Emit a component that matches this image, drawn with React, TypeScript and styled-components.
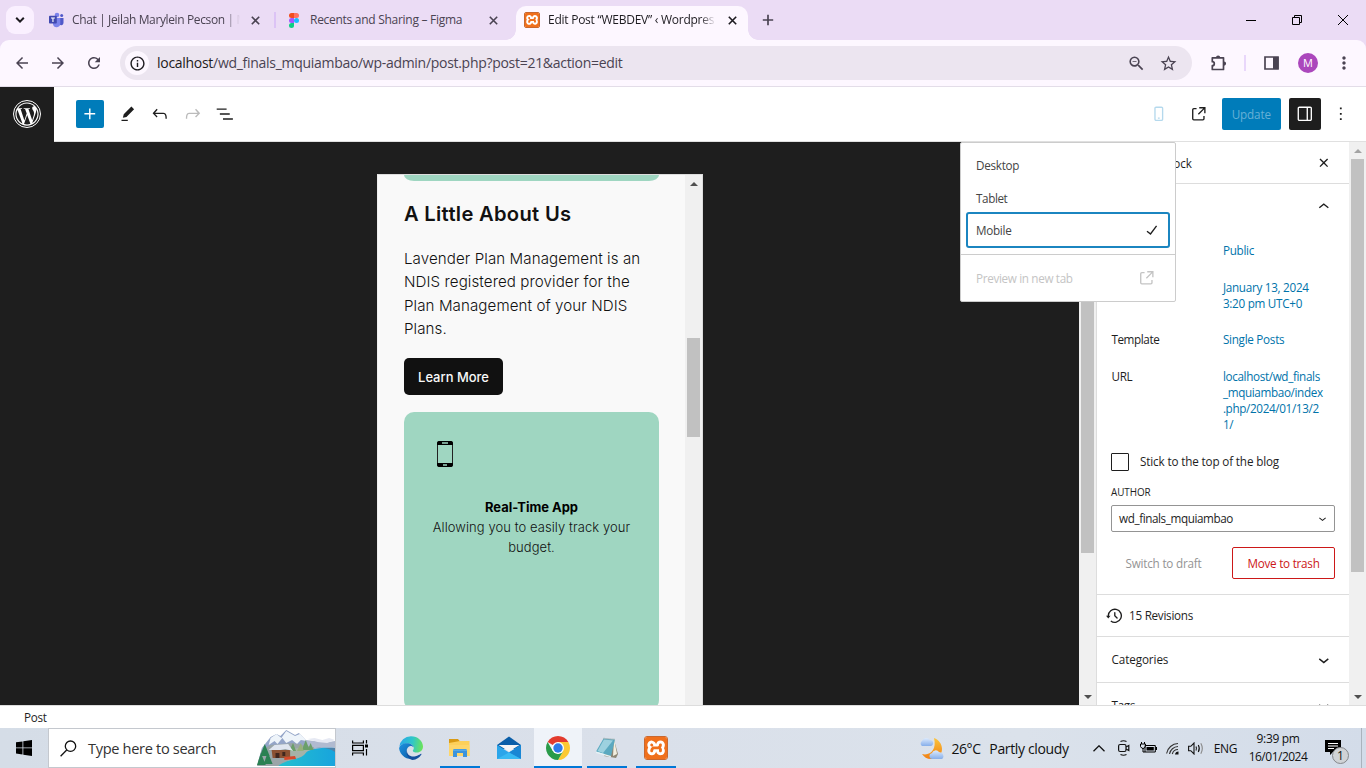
import React from 'react';
import styled, { createGlobalStyle, css } from 'styled-components';
import {
  MdArrowBack, MdArrowForward, MdRefresh, MdInfoOutline, MdZoomOut, MdStarBorder, MdMoreVert,
} from 'react-icons/md';
import { FaWordpressSimple } from 'react-icons/fa';
import { SiXampp } from 'react-icons/si';

const Global = createGlobalStyle`
  * { box-sizing: border-box; }
  body { margin: 0; overflow: hidden; font-family: "Open Sans", "Noto Sans", sans-serif; }
  svg { display: block; flex: none; }
`;

const Screen = styled.div`
  width: 1366px; height: 768px; display: flex; flex-direction: column; overflow: hidden; background: #fff;
`;

const Label = styled.span<{ size?: number; track?: number; color?: string; weight?: number }>`
  font-size: ${p => p.size ?? 11.7}px;
  letter-spacing: ${p => p.track ?? -0.28}px;
  color: ${p => p.color ?? '#1e1e1e'};
  font-weight: ${p => p.weight ?? 400};
  white-space: nowrap;
`;
const UiText = styled(Label)`padding-bottom: 2px;`;

/* ---------- browser ---------- */
const TabStrip = styled.div`
  height: 40px; flex: none; background: #ebdcf5; display: flex; align-items: flex-end; padding-left: 6px;
`;
const TabSearch = styled.div`
  width: 28px; height: 28px; border-radius: 9px; background: #faf0ff; margin-bottom: 6px;
  display: flex; align-items: center; justify-content: center;
`;
const Tab = styled.div<{ w: number; ml: number; active?: boolean; right?: number }>`
  width: ${p => p.w}px; height: 34px; margin-left: ${p => p.ml}px; padding: 0 ${p => p.right ?? 11}px 6px 8px;
  display: flex; align-items: center; position: relative; border-radius: 10px 10px 0 0;
  ${p => p.active && css`
    background: #fdf7ff;
    &::before, &::after {
      content: ''; position: absolute; bottom: 0; width: 10px; height: 10px;
    }
    &::before { left: -10px; background: radial-gradient(circle at 0 0, transparent 9.5px, #fdf7ff 10px); }
    &::after { right: -10px; background: radial-gradient(circle at 100% 0, transparent 9.5px, #fdf7ff 10px); }
  `}
`;
const TabTitle = styled(Label)<{ w: number; ml: number; fade?: boolean }>`
  width: ${p => p.w}px; margin-left: ${p => p.ml}px; overflow: hidden; line-height: 20px;
  ${p => p.fade && css`
    mask-image: linear-gradient(to right, #000 calc(100% - 16px), transparent);
  `}
`;
const Spacer = styled.div<{ w?: number }>`
  ${p => (p.w === undefined ? 'flex: 1;' : `width: ${p.w}px; flex: none;`)}
`;
const TabDivider = styled.div`width: 2px; height: 16px; background: #dcc3f5; margin-bottom: 12px;`;
const WindowButton = styled.div`
  width: 46px; height: 40px; display: flex; align-items: center; justify-content: center;
`;
const NewTab = styled.div`
  width: 40px; height: 40px; display: flex; align-items: center; justify-content: center;
`;
const ToolbarBack = styled.div`background: #ebdcf5; flex: none;`;
const Toolbar = styled.div`
  height: 47px; background: #fdf7ff; border-radius: 9px 9px 0 0; border-bottom: 1px solid #e3dde8;
  display: flex; align-items: center; color: #4a4352; padding-left: 4px;
`;
const ToolCell = styled.div<{ w: number }>`
  width: ${p => p.w}px; display: flex; align-items: center; justify-content: center; flex: none;
`;
const Omnibox = styled.div`
  width: 1072px; height: 34px; margin-left: 8px; border-radius: 17px; background: #ece5f0;
  display: flex; align-items: center; padding: 0 14px 0 5px;
`;
const SiteInfo = styled.div`
  width: 24px; height: 24px; border-radius: 50%; background: #fdf7ff; color: #1d1b20; margin-right: 8px;
  display: flex; align-items: center; justify-content: center;
`;
const Avatar = styled.div`
  width: 20px; height: 20px; border-radius: 50%; background: #ab47bc; color: #fff;
  font-size: 11px; line-height: 20px; text-align: center;
`;
const BarDivider = styled.div`width: 2px; height: 16px; background: #e9d7fb;`;

/* ---------- editor ---------- */
const EditorHeader = styled.div`
  height: 55px; flex: none; display: flex; align-items: center; background: #fff; border-bottom: 1px solid #e0e0e0;
`;
const SiteHub = styled.div`
  width: 54px; height: 55px; background: #1e1e1e; margin-bottom: -1px; color: #fff;
  display: flex; align-items: center; justify-content: center; padding-bottom: 1px;
`;
const LogoRing = styled.div`
  width: 28px; height: 28px; border: 1.5px solid #fff; border-radius: 50%;
  display: flex; align-items: center; justify-content: center;
`;
const Inserter = styled.div`
  width: 28px; height: 28px; background: #007cba; border-radius: 2px; color: #fff; margin: 0 8px 0 22px;
  display: flex; align-items: center; justify-content: center;
`;
const EditorTool = styled.div<{ dim?: boolean }>`
  width: 32.2px; height: 32px; display: flex; align-items: center; justify-content: center;
  color: ${p => (p.dim ? '#bbb' : '#1e1e1e')};
`;
const UpdateButton = styled.div`
  width: 59px; height: 32px; background: #007cba; border-radius: 2px; margin-left: 7px;
  display: flex; align-items: center; justify-content: center;
`;
const SettingsToggle = styled.div`
  width: 32px; height: 32px; background: #1e1e1e; border-radius: 2px; color: #fff; margin: 0 4px 0 8px;
  display: flex; align-items: center; justify-content: center;
`;
const Workspace = styled.div`height: 563px; flex: none; display: flex; overflow: hidden; position: relative;`;
const Canvas = styled.div`width: 1079px; background: #1e1e1e; padding: 32px 0 0 377px;`;
const DeviceFrame = styled.div`
  width: 326px; height: 600px; background: #f9f9f9; border: 1px solid #ddd; border-left-color: #eee;
  display: flex; overflow: hidden;
`;
const Page = styled.div`
  width: 307px; padding: 0 25px 0 26px; font-family: Inter, sans-serif; color: #111; flex: none;
`;
const CardTail = styled.div`width: 255px; height: 6px; background: #9fd6c1; border-radius: 0 0 10px 10px / 0 0 6px 6px;`;
const Heading = styled.h2`
  margin: 21px 0 0; font-size: 20.16px; font-weight: 600; line-height: 24px; letter-spacing: 0.3px; color: #111; white-space: nowrap;
`;
const Paragraph = styled.p`
  margin: 21px 0 0; font-size: 15.12px; font-weight: 300; line-height: 23.4px; letter-spacing: 0.09px; white-space: nowrap;
`;
const LearnMore = styled.div`
  width: 99px; height: 37px; margin-top: 17px; background: #111; color: #f9f9f9; border-radius: 5px;
  font-size: 12.96px; font-weight: 500; line-height: 39px; text-align: center;
`;
const FeatureCard = styled.div`
  width: 255px; height: 298px; margin-top: 17px; background: #9fd6c1; border-radius: 10px; padding: 29px 20px 0;
  display: flex; flex-direction: column; text-align: center; font-size: 12.96px; font-weight: 300; line-height: 20px; color: #111;
`;
const FeatureText = styled.span`letter-spacing: 0.09px;`;
const PhoneMark = styled.svg`margin: 0 0 30px 13px;`;
const FeatureTitle = styled.b`font-weight: 700; color: #000;`;

const ScrollTrack = styled.div`
  width: 17px; flex: none; background: #f0f0f0; padding: 0 2px; display: flex; flex-direction: column; align-items: center;
`;
const ScrollArrow = styled.div<{ dir: 'up' | 'down'; dim?: boolean }>`
  height: 17px; width: 13px; display: flex; align-items: center; justify-content: center; flex: none;
  &::before {
    content: ''; border: 4px solid transparent;
    ${p => (p.dir === 'up'
      ? `border-top: 0; border-bottom-color: ${p.dim ? '#a3a3a3' : '#505050'};`
      : `border-bottom: 0; border-top-color: #505050;`)}
  }
`;
const Thumb = styled.div<{ top: number; h: number }>`
  width: 13px; height: ${p => p.h}px; margin-top: ${p => p.top}px; background: #c1c1c1; flex: none;
`;

const Sidebar = styled.div`width: 253px; flex: none; border-left: 1px solid #ddd; background: #fff; overflow: hidden;`;
const SidebarTabs = styled.div`
  height: 42px; border-bottom: 1px solid #ddd; display: flex; align-items: center; justify-content: space-between;
  padding: 1px 14px 0 66px;
`;
const SummaryToggle = styled.div`height: 45px; display: flex; justify-content: flex-end; align-items: center; padding: 0 14px;`;
const Summary = styled.div`
  height: 366px; border-bottom: 1px solid #ddd; padding: 13px 14px 0; display: flex; flex-direction: column; gap: 20.5px;
`;
const MetaRow = styled.div`
  display: grid; grid-template-columns: 111.5px 1fr; line-height: 16px; align-items: start; padding-left: 0.4px;
`;
const MetaValue = styled(Label)`white-space: pre-line; grid-column: 2; line-height: 16px;`;
const StickyRow = styled.div`display: flex; align-items: center; height: 18px; gap: 11px; margin-top: 1px;`;
const CheckBox = styled.div`width: 18px; height: 18px; border: 1px solid #1e1e1e; border-radius: 1px;`;
const AuthorField = styled.div`display: flex; flex-direction: column; gap: 6px; margin-top: -7px;`;
const Select = styled.div`
  width: 224px; height: 27px; border: 1px solid #949494; border-radius: 2px; padding: 0 4px 0 7px;
  display: flex; align-items: center; justify-content: space-between;
`;
const ActionRow = styled.div`display: flex; gap: 16px; margin-top: -5.5px;`;
const ActionButton = styled.div<{ danger?: boolean }>`
  width: ${p => (p.danger ? 103 : 105)}px; height: 32px; border-radius: 2px;
  border: 1px solid ${p => (p.danger ? '#cc1818' : 'transparent')};
  display: flex; align-items: center; justify-content: center;
`;
const RevisionRow = styled.div`
  height: 42px; border-bottom: 1px solid #ddd; display: flex; align-items: center; padding: 0 7px; gap: 3.5px;
`;
const PanelRow = styled.div`
  height: 46px; border-bottom: 1px solid #ddd; display: flex; align-items: center; justify-content: space-between;
  padding: 0 14px 0 14.5px;
`;

const PreviewMenu = styled.div`
  position: absolute; left: 960px; top: 0; width: 216px; height: 160px; background: #fff; border: 1px solid #ccc;
  border-radius: 2px; display: flex; flex-direction: column;
`;
const MenuItem = styled.div<{ h: number; selected?: boolean; right?: number }>`
  height: ${p => p.h}px; margin: 0 5px; padding: 0 ${p => p.right ?? 10}px 0 10px;
  display: flex; align-items: center; justify-content: space-between;
  ${p => p.selected && css`margin-top: 4px; box-shadow: inset 0 0 0 2px #1b85c0; border-radius: 3px;`}
`;
const MenuRule = styled.div`border-top: 1px solid #ccc; margin: 6px 0 6px;`;

const EditorFooter = styled.div`
  height: 23px; flex: none; border-top: 1px solid #ddd; background: #fff; padding-left: 24px; display: flex; align-items: center;
`;

/* ---------- taskbar ---------- */
const Taskbar = styled.div`
  height: 40px; flex: none; display: flex; align-items: stretch;
  background: linear-gradient(90deg, #d5dde7, #dae0ea 45%, #dbe2eb 75%, #d3dce9);
`;
const TaskCell = styled.div<{ w?: number; open?: boolean; active?: boolean }>`
  width: ${p => p.w ?? 48}px; margin-right: ${p => (p.w ? 0 : 1)}px; display: flex; align-items: center; justify-content: center;
  flex: none;
  background-color: ${p => (p.active ? '#eff3f9' : 'transparent')};
  background-image: ${p => (p.open || p.active ? 'linear-gradient(#0078d7, #0078d7)' : 'none')};
  background-repeat: no-repeat; background-position: center bottom;
  background-size: ${p => (p.active ? '48px' : '40px')} 2px;
`;
const SearchBox = styled.div`
  width: 288px; border: 1px solid #c4c8ce; background: #fff; display: flex; align-items: center; padding-left: 11px;
`;
const Clock = styled.div`
  width: 70px; display: flex; flex-direction: column; align-items: center; justify-content: center; line-height: 18px;
`;
const PeekEdge = styled.div`width: 5px; border-left: 1px solid #aab3bd;`;

const wp = {
  plus: 'M18 11.2h-5.2V6h-1.6v5.2H6v1.6h5.2V18h1.6v-5.2H18z',
  edit: 'm19 7-3-3-8.5 8.5-1 4 4-1L19 7Zm-7 11.5H5V20h7v-1.5Z',
  undo: 'M18.3 11.7c-.6-.6-1.4-.9-2.3-.9H6.7l2.9-3.3-1.1-1-4.5 5L8.5 16l1-1-2.7-2.7H16c.5 0 .9.2 1.3.5 1 1 1 3.4 1 4.5v.3h1.5v-.2c0-1.5 0-4.3-1.5-5.7z',
  redo: 'M15.6 6.5l-1.1 1 2.9 3.3H8c-.9 0-1.7.3-2.3.9-1.4 1.5-1.4 4.2-1.4 5.6v.2h1.5v-.3c0-1.1 0-3.5 1-4.5.3-.3.7-.5 1.3-.5h9.2L14.5 15l1.1 1.1 4.6-4.6-4.6-5z',
  list: 'M3 6h11v1.5H3V6Zm3.5 5.5h11V13h-11v-1.5ZM21 17H10v1.5h11V17Z',
  mobile: 'M15 4H9c-1.1 0-2 .9-2 2v12c0 1.1.9 2 2 2h6c1.1 0 2-.9 2-2V6c0-1.1-.9-2-2-2zm.5 14c0 .3-.2.5-.5.5H9c-.3 0-.5-.2-.5-.5V6c0-.3.2-.5.5-.5h6c.3 0 .5.2.5.5v12zm-4.5-.5h2V16h-2v1.5z',
  external: 'M19.5 4.5h-7V6h4.44l-5.97 5.97 1.06 1.06L18 7.06v4.44h1.5v-7Zm-13 1a2 2 0 0 0-2 2v10a2 2 0 0 0 2 2h10a2 2 0 0 0 2-2v-3H17v3a.5.5 0 0 1-.5.5h-10a.5.5 0 0 1-.5-.5v-10a.5.5 0 0 1 .5-.5h3V5.5h-3Z',
  drawer: 'M18 4H6c-1.1 0-2 .9-2 2v12c0 1.1.9 2 2 2h12c1.1 0 2-.9 2-2V6c0-1.1-.9-2-2-2zm-4 14.5H6c-.3 0-.5-.2-.5-.5V6c0-.3.2-.5.5-.5h8v13zm4.5-.5c0 .3-.2.5-.5.5h-2.5v-13H18c.3 0 .5.2.5.5v12z',
  more: 'M13 19h-2v-2h2v2zm0-6h-2v-2h2v2zm0-6h-2V5h2v2z',
  check: 'M16.7 7.1l-6.3 8.5-3.3-2.5-.9 1.2 4.5 3.4L17.9 8z',
  close: 'M12 13.06l3.712 3.713 1.061-1.06L13.061 12l3.712-3.712-1.06-1.06L12 10.938 8.288 7.227l-1.061 1.06L10.939 12l-3.712 3.712 1.06 1.061L12 13.061z',
  up: 'M6.5 12.4L12 8l5.5 4.4-.9 1.2L12 10l-4.5 3.6-1-1.2z',
  down: 'M17.5 11.6L12 16l-5.5-4.4.9-1.2L12 14l4.5-3.6 1 1.2z',
  backup: 'M5.5 12h1.75l-2.5 3-2.5-3H4a8 8 0 113.134 6.35l.907-1.194A6.5 6.5 0 105.5 12zm9.53 1.97l-2.28-2.28V8.5a.75.75 0 00-1.5 0V12a.747.747 0 00.218.529l1.282-.84-1.28.842 2.5 2.5a.75.75 0 101.06-1.061z',
};
const WpIcon = ({ name, color = 'currentColor', size = 21.6 }: { name: keyof typeof wp; color?: string; size?: number }) => (
  <svg width={size} height={size} viewBox="0 0 24 24" fill={color}><path d={wp[name]} /></svg>
);

const TabClose = ({ color = '#4a4352' }: { color?: string }) => (
  <svg width="9" height="9" viewBox="0 0 9 9" stroke={color} strokeWidth="1.6"><path d="M.8.8l7.4 7.4M8.2.8L.8 8.2" /></svg>
);
const TeamsLogo = () => (
  <svg width="16" height="16" viewBox="0 0 16 16">
    <circle cx="9" cy="3" r="2.3" fill="#7b83eb" /><circle cx="13.7" cy="3.6" r="1.5" fill="#5059c9" />
    <path d="M11 6h4.5v5a2.3 2.3 0 0 1-4.5.6z" fill="#5059c9" />
    <path d="M5 6h7.3v5.5a3.7 3.7 0 0 1-7.3.8z" fill="#7b83eb" />
    <rect x="1" y="3.8" width="7.8" height="7.8" rx=".8" fill="#4049b0" />
    <path d="M3 6h3.9M4.95 6v4" stroke="#fff" strokeWidth="1.1" />
  </svg>
);
const FigmaLogo = () => (
  <svg width="10" height="15" viewBox="0 0 10 15">
    <path d="M5 0H2.5a2.5 2.5 0 0 0 0 5H5z" fill="#f24e1e" /><path d="M5 0h2.5a2.5 2.5 0 0 1 0 5H5z" fill="#ff7262" />
    <path d="M5 5H2.5a2.5 2.5 0 0 0 0 5H5z" fill="#a259ff" /><circle cx="7.5" cy="7.5" r="2.5" fill="#1abcfe" />
    <path d="M2.5 10H5v2.5A2.5 2.5 0 1 1 2.5 10z" fill="#0acf83" />
  </svg>
);
const PuzzleIcon = () => (
  <svg width="18" height="18" viewBox="0 0 18 18">
    <path d="M2.300 3.800h11.200v11.700H2.300v-3.800a2 2 0 0 0 0-4z" fill="none" stroke="#4a4352" strokeWidth="1.700" strokeLinejoin="round" />
    <path d="M6 3.500a2.100 2.100 0 0 1 4.200 0zM14 7.500a2.100 2.100 0 0 1 0 4.200z" fill="#4a4352" />
  </svg>
);
const XamppBox = styled.div<{ s: number }>`
  width: ${p => p.s}px; height: ${p => p.s}px; border-radius: ${p => p.s / 8}px; color: #f0701c; flex: none;
  background: #fff; overflow: hidden; border: 1px solid #c9682f;
  display: flex; align-items: center; justify-content: center;
`;
const Xampp = ({ s }: { s: number }) => <XamppBox s={s}><SiXampp size={s} /></XamppBox>;

const EdgeLogo = () => (
  <svg width="24" height="24" viewBox="0 0 24 24">
    <defs>
      <linearGradient id="eg1" x1="0" y1=".3" x2="1" y2=".4"><stop offset="0" stopColor="#2aa6e8" /><stop offset=".55" stopColor="#2fc6c9" /><stop offset="1" stopColor="#6be35a" /></linearGradient>
      <linearGradient id="eg2" x1="0" y1="0" x2="1" y2="1"><stop offset="0" stopColor="#1d92e0" /><stop offset="1" stopColor="#0c59a4" /></linearGradient>
    </defs>
    <path d="M.3 11A11.8 11.8 0 0 1 12 .2c7 0 12 5 12 10.400 0 3.800-2.800 6-6 6-2.500 0-4.200-.9-4.200-1.800 0-.7 1-1 1-2.800 0-2.700-2.600-4.600-6-4.600C4.500 7.400 1 9 .3 11z" fill="url(#eg1)" />
    <path d="M.1 12.500C.3 9.200 4 7.200 8 7.200c3.600 0 6.300 2 6.800 4.200-.6-1-2-1.500-3.200-1.500-2.400.4-4 2.300-4 5.100 0 4 3 7 7.500 7.500A12 12 0 0 1 .1 12.500z" fill="url(#eg2)" />
    <path d="M8 13.400c-.8 5.400 4 8 8.500 6.800 2.300-.6 4.300-1.600 5.400-2.400.5-.3.800.1.500.600A12 12 0 0 1 13.600 24C8.700 23 6.400 17 8 13.400z" fill="#134f9e" />
  </svg>
);
const ExplorerLogo = () => (
  <svg width="24" height="20" viewBox="0 0 24 20">
    <path d="M1 1h9l2 2.500V7H1z" fill="#d99a14" /><path d="M1 5l11-2h9.500v15H1z" fill="#fdd05a" />
    <path d="M1 7h21v11H1z" fill="#ffda75" opacity=".6" />
    <path d="M5 19v-6.500Q5 11 6.500 11h11q1.500 0 1.500 1.500V19h-4v-4H9v4z" fill="#3c94dd" /><path d="M5 11.500h14V13H5z" fill="#5fb2ee" opacity=".7" />
  </svg>
);
const MailLogo = () => (
  <svg width="26" height="24" viewBox="0 0 26 24">
    <path d="M1 9L13 .5 25 9v4H1z" fill="#0a5ea8" />
    <path d="M1 9l12 7.500L25 9v14H1z" fill="#2aa5ea" /><path d="M25 9L13 16.500 25 23z" fill="#1a86d4" /><path d="M1 23l12-6.500 12 6.500z" fill="#38b9f3" />
    <path d="M2.500 9h21L13 15.500z" fill="#f5f5f5" />
  </svg>
);
const ChromeLogo = () => (
  <svg width="24" height="24" viewBox="0 0 24 24">
    <path d="M12 12L1.610 6A12 12 0 0 1 22.390 6z" fill="#e33b2e" /><path d="M12 6h10.390A12 12 0 0 1 12 24l5.200-9z" fill="#fcc934" />
    <path d="M1.610 6l5.200 9 5.190 3 .9 0L12 24A12 12 0 0 1 1.610 6z" fill="#2a9b4a" /><path d="M6.800 15L12 18l5.200-3L12 24z" fill="#2a9b4a" />
    <circle cx="12" cy="12" r="6" fill="#fff" /><circle cx="12" cy="12" r="4.700" fill="#2f7bea" />
  </svg>
);
const NotepadLogo = () => (
  <svg width="24" height="24" viewBox="0 0 24 24">
    <path d="M19 4l4 14-2 4-12-2z" fill="#8d8674" /><path d="M19 3l3 15-4 2z" fill="#f2efdf" />
    <path d="M8.500 2.500l11.500 1L16 20 1 15.500z" fill="#5ba9c0" /><path d="M9 3.500l9 1L8 17l-5.500-2z" fill="#b9e3ec" opacity=".7" />
    <path d="M1 15.500L16 20l-.3 1.300L1 17z" fill="#e6f2f5" /><path d="M8.500 2.500l11.500 1" stroke="#9aa" strokeWidth="1.500" strokeDasharray="1 1" />
  </svg>
);
const Landscape = () => (
  <svg width="78" height="36" viewBox="0 0 80 36" preserveAspectRatio="none">
    <defs><linearGradient id="lake" x1="0" x2="1"><stop offset="0" stopColor="#23c0cf" /><stop offset="1" stopColor="#18a4dd" /></linearGradient></defs>
    <path d="M5 18L14 7l6-3 4 2 6-6 9 5 4-2 7 7 8 7v15H1z" fill="#94a5c8" />
    <path d="M14 8l6-4 5 4 5-7 9 5 5-2 7 7-6-1-4 4-5-4-6 3-4-5-5 6-3-3-6 4z" fill="#eef4fa" />
    <path d="M50 10l9 1 6-1 8 2 7-1v12H50z" fill="#b0bad0" /><path d="M52 9l7-1 8 2 7-2 6 2-8 3-10-1z" fill="#e6e9f3" />
    <path d="M0 36l5-16 9-5 22-2 22 4 4 6-20 13z" fill="#9aa5a8" /><path d="M30 20l18-3 10 3-12 8-14 4z" fill="#a5b3a8" />
    <path d="M22 36c7-7 24-6 28-13 2-3 12-6 30-5v18z" fill="url(#lake)" />
    <path d="M60 18q12-1 20 4v-4z" fill="#4f82a8" />
    <path d="M8 14l5 12H3zM4 23l5 12H0zM11 22l5 12H7z" fill="#2a8153" />
    <path d="M37 13l3 8h-7zM50 10l4 10h-8zM55 13l3 7h-6z" fill="#6b9f6a" /><path d="M45 13l3 8h-7z" fill="#98b07c" />
    <path d="M15 20h19v8H16z" fill="#8b5132" /><path d="M12 20l6-5 14-1 5 7-8-2-5 1z" fill="#dfe5ef" /><path d="M19 23h4v5h-4zM26 22h3v4h-3z" fill="#40271e" />
    <path d="M28 27l11-1 1 3-12 1z" fill="#d5492b" />
  </svg>
);
const WeatherIcon = () => (
  <svg width="25" height="23" viewBox="0 0 25 23">
    <defs><linearGradient id="moon" x1="0" y1="0" x2="0" y2="1"><stop offset="0" stopColor="#fbc43d" /><stop offset="1" stopColor="#f07f13" /></linearGradient>
      <linearGradient id="cloud" x1="0" y1="0" x2="0" y2="1"><stop offset="0" stopColor="#dceafd" /><stop offset="1" stopColor="#86aeea" /></linearGradient></defs>
    <path d="M15 1c5 2 8 6 8 11 0 6-5 10-11 10-4 0-7-2-9-5 8 2 15-4 12-16z" fill="url(#moon)" />
    <path d="M3 9a3 3 0 0 1 0-5 4.500 4.500 0 0 1 8-1c3 0 4 3 2.500 5q-.5 1-2 1z" fill="url(#cloud)" />
    <path d="M14 22a3 3 0 0 1-1-6 4 4 0 0 1 7-1c4 0 6 5 3 7z" fill="url(#cloud)" />
  </svg>
);

export default function App() {
  return (
    <Screen>
      <Global />
      <TabStrip>
        <TabSearch><svg width="10" height="6" viewBox="0 0 10 6" fill="none" stroke="#1d1b20" strokeWidth="2"><path d="M1.200 .8L5 4.600 8.800 .8" /></svg></TabSearch>
        <Tab w={226} ml={6} right={6}>
          <TeamsLogo />
          <TabTitle size={12} w={168} ml={8} track={-0.37} fade color="#4a4352">Chat | Jeilah Marylein Pecson | M</TabTitle>
          <Spacer /><TabClose />
        </Tab>
        <Spacer w={8} /><TabDivider />
        <Tab w={229} ml={4}>
          <Spacer w={1} /><FigmaLogo />
          <TabTitle size={12} w={165} ml={11} color="#4a4352">Recents and Sharing – Figma</TabTitle>
          <Spacer /><TabClose />
        </Tab>
        <Tab w={232} ml={7} active>
          <Xampp s={16} />
          <TabTitle size={12} w={168} ml={8} fade track={-0.25} color="#1d1b20">Edit Post “WEBDEV” ‹ Wordpres</TabTitle>
          <Spacer /><TabClose color="#1d1b20" />
        </Tab>
        <NewTab><svg width="12" height="12" viewBox="0 0 12 12" stroke="#4a4352" strokeWidth="1.700"><path d="M6 .8v10.400M.8 6h10.400" /></svg></NewTab>
        <Spacer />
        <WindowButton><svg width="10" height="10" viewBox="0 0 10 10" stroke="#000"><path d="M0 5.500h10" /></svg></WindowButton>
        <WindowButton><svg width="10" height="10" viewBox="0 0 10 10" stroke="#000" fill="none"><path d="M.5 2.500h7v7h-7zM2.500 2.500v-2h7v7h-2" /></svg></WindowButton>
        <WindowButton><svg width="10" height="10" viewBox="0 0 10 10" stroke="#000"><path d="M0 0l10 10M10 0L0 10" /></svg></WindowButton>
      </TabStrip>
      <ToolbarBack>
        <Toolbar>
          <ToolCell w={36}><MdArrowBack size={18} /></ToolCell>
          <ToolCell w={36}><MdArrowForward size={18} /></ToolCell>
          <ToolCell w={36}><MdRefresh size={18} /></ToolCell>
          <Omnibox>
            <SiteInfo><MdInfoOutline size={17} /></SiteInfo>
            <UiText size={14} track={-0.29} color="#1d1b20">localhost<Label size={14} track={-0.29} color="#4a4352">/wd_finals_mquiambao/wp-admin/post.php?post=21&amp;action=edit</Label></UiText>
            <Spacer />
            <MdZoomOut size={19} /><Spacer w={13} /><MdStarBorder size={19} />
          </Omnibox>
          <Spacer w={18} /><PuzzleIcon />
          <Spacer w={16} /><BarDivider /><Spacer w={18} />
          <svg width="15" height="14" viewBox="0 0 15 14"><path d="M1 1h13v12H1z" fill="none" stroke="#4a4352" strokeWidth="1.700" /><path d="M9 1h5.500v12H9z" fill="#4a4352" /></svg>
          <Spacer w={19} /><Avatar>M</Avatar>
          <Spacer w={16} /><MdMoreVert size={20} />
        </Toolbar>
      </ToolbarBack>

      <EditorHeader>
        <SiteHub><LogoRing><FaWordpressSimple size={24} /></LogoRing></SiteHub>
        <Inserter><WpIcon name="plus" /></Inserter>
        <EditorTool><WpIcon name="edit" /></EditorTool>
        <EditorTool><WpIcon name="undo" /></EditorTool>
        <EditorTool dim><WpIcon name="redo" /></EditorTool>
        <EditorTool><WpIcon name="list" /></EditorTool>
        <Spacer />
        <WpIcon name="mobile" color="#b5d9ed" /><Spacer w={18.6} />
        <WpIcon name="external" color="#1e1e1e" /><Spacer w={5} />
        <UpdateButton><Label color="#66b0d6" track={-0.15}>Update</Label></UpdateButton>
        <SettingsToggle><WpIcon name="drawer" /></SettingsToggle>
        <EditorTool><WpIcon name="more" /></EditorTool>
        <Spacer w={9} />
      </EditorHeader>

      <Workspace>
        <Canvas>
          <DeviceFrame>
            <Page>
              <CardTail />
              <Heading>A Little About Us</Heading>
              <Paragraph>
                Lavender Plan Management is an<br />NDIS registered provider for the<br />Plan Management of your NDIS<br />Plans.
              </Paragraph>
              <LearnMore>Learn More</LearnMore>
              <FeatureCard>
                <PhoneMark width="16" height="26" viewBox="0 0 16 26">
                  <rect x=".5" y=".5" width="15" height="25" rx="2" fill="none" stroke="#222" />
                  <path d="M2 0h12a2 2 0 0 1 2 2v2H0V2a2 2 0 0 1 2-2zM0 22h16v2a2 2 0 0 1-2 2H2a2 2 0 0 1-2-2z" fill="#000" />
                  <path d="M5 2h6M6 24h4" stroke="#9fd6c1" strokeWidth="1.300" />
                </PhoneMark>
                <FeatureTitle>Real-Time App</FeatureTitle>
                <FeatureText>Allowing you to easily track your<br />budget.</FeatureText>
              </FeatureCard>
            </Page>
            <ScrollTrack><ScrollArrow dir="up" /><Thumb top={146} h={99} /></ScrollTrack>
          </DeviceFrame>
        </Canvas>
        <ScrollTrack><ScrollArrow dir="up" /><Thumb top={60} h={334} /><Spacer /><ScrollArrow dir="down" /></ScrollTrack>
        <Sidebar>
          <SidebarTabs><Label weight={500} track={-0.1}>Block</Label><WpIcon name="close" color="#1e1e1e" /></SidebarTabs>
          <SummaryToggle><WpIcon name="up" color="#1e1e1e" /></SummaryToggle>
          <Summary>
            <MetaRow><MetaValue color="#0073aa">Public</MetaValue></MetaRow>
            <MetaRow><MetaValue color="#0073aa">{'January 13, 2024\n3:20 pm UTC+0'}</MetaValue></MetaRow>
            <MetaRow><Label track={-0.4}>Template</Label><MetaValue color="#0073aa">Single Posts</MetaValue></MetaRow>
            <MetaRow><Label>URL</Label><MetaValue track={-0.35} color="#0073aa">{'localhost/wd_finals\n_mquiambao/index\n.php/2024/01/13/2\n1/'}</MetaValue></MetaRow>
            <StickyRow><CheckBox /><UiText track={-0.15}>Stick to the top of the blog</UiText></StickyRow>
            <AuthorField>
              <Label size={9.9} track={-0.05}>AUTHOR</Label>
              <Select><Label track={-0.4}>wd_finals_mquiambao</Label><WpIcon name="down" size={15} color="#1e1e1e" /></Select>
            </AuthorField>
            <ActionRow>
              <ActionButton><Label track={-0.2} color="#949494">Switch to draft</Label></ActionButton>
              <ActionButton danger><Label track={-0.25} color="#cc1818">Move to trash</Label></ActionButton>
            </ActionRow>
          </Summary>
          <RevisionRow><WpIcon name="backup" color="#1e1e1e" /><UiText>15 Revisions</UiText></RevisionRow>
          <PanelRow><UiText track={-0.1}>Categories</UiText><WpIcon name="down" color="#1e1e1e" /></PanelRow>
          <PanelRow><UiText>Tags</UiText><WpIcon name="down" color="#1e1e1e" /></PanelRow>
        </Sidebar>
        <ScrollTrack><ScrollArrow dir="up" dim /><Thumb top={0} h={413} /><Spacer /><ScrollArrow dir="down" /></ScrollTrack>
        <PreviewMenu>
          <MenuItem h={46}><UiText color="#444">Desktop</UiText></MenuItem>
          <MenuItem h={19}><UiText color="#444" track={-0.4}>Tablet</UiText></MenuItem>
          <MenuItem h={36} right={7} selected><Label color="#444">Mobile</Label><WpIcon name="check" color="#1e1e1e" /></MenuItem>
          <MenuRule />
          <MenuItem h={34} right={12}><Label track={-0.33} color="#c4c4c4">Preview in new tab</Label><WpIcon name="external" color="#c4c4c4" /></MenuItem>
        </PreviewMenu>
      </Workspace>
      <EditorFooter><Label>Post</Label></EditorFooter>

      <Taskbar>
        <TaskCell w={48}>
          <svg width="16" height="16" viewBox="0 0 16 16"><path d="M0 2.300l6.500-.9v6.100H0zM7.300 1.300L16 0v7.500H7.300zM0 8.300h6.500v6.100L0 13.600zM7.300 8.300H16V16l-8.700-1.300z" /></svg>
        </TaskCell>
        <SearchBox>
          <svg width="17" height="17" viewBox="0 0 17 17" fill="none" stroke="#111" strokeWidth="1.300"><circle cx="10.500" cy="6.200" r="5.200" /><path d="M6.700 10L.6 16.200" /></svg>
          <Spacer w={11} />
          <Label size={14.6} track={-0.33} color="#333">Type here to search</Label>
          <Spacer /><Landscape />
        </SearchBox>
        <TaskCell w={48}>
          <svg width="17" height="16" viewBox="0 0 17 16" fill="none" stroke="#000" strokeWidth="1.200"><path d="M.6.500v2.500h10.800V.5M.6 15.500V13h10.800v2.500M.6 5.400h10.800v5.200H.6zM14.500 0v3.500M14.500 9v6.500" /><path d="M13 4.500h3v3h-3z" fill="#000" stroke="none" /></svg>
        </TaskCell>
        <Spacer w={3} />
        <TaskCell><EdgeLogo /></TaskCell>
        <TaskCell open><ExplorerLogo /></TaskCell>
        <TaskCell><MailLogo /></TaskCell>
        <TaskCell active><ChromeLogo /></TaskCell>
        <TaskCell open><NotepadLogo /></TaskCell>
        <TaskCell open><Xampp s={24} /></TaskCell>
        <Spacer />
        <TaskCell w={25}><WeatherIcon /></TaskCell>
        <Spacer w={7} />
        <TaskCell w={30}><Label size={14} track={-0.45} color="#111">26°C</Label></TaskCell>
        <Spacer w={8} />
        <TaskCell w={80}><Label size={14} track={-0.35} color="#111">Partly cloudy</Label></TaskCell>
        <Spacer w={18} />
        <TaskCell w={24}><svg width="12" height="7" viewBox="0 0 12 7" fill="none" stroke="#111" strokeWidth="1.300"><path d="M.5 6.300L6 .8l5.500 5.500" /></svg></TaskCell>
        <TaskCell w={25}><svg width="12" height="16" viewBox="0 0 12 16" fill="none" stroke="#111" strokeWidth="1.200"><path d="M2.500 1.500q3-1.500 6 0M2.500 14.500q3 1.500 6 0" /><rect x=".6" y="4.500" width="7.400" height="7" rx="1.500" /><path d="M8 7l2.800-1.500v5L8 9" /></svg></TaskCell>
        <TaskCell w={24}><svg width="17" height="12" viewBox="0 0 17 12"><path d="M5 3.500h10.300v6.500H5z" fill="none" stroke="#000" /><path d="M6.500 5h7.300v3.500H6.500zM15.500 5H17v3h-1.500z" /><path d="M.5 2h5v2.500q-1 2-2.500 2t-2.500-2zM1.500 0v2M4.500 0v2M3 6v4h2" fill="none" stroke="#000" /></svg></TaskCell>
        <TaskCell w={24}><svg width="13" height="13" viewBox="0 0 13 13" fill="none" stroke="#333" strokeWidth="1.100"><path d="M.6 11.500A12 12 0 0 1 12 1.500M3.500 12A9 9 0 0 1 12 4.500M6.300 12A6 6 0 0 1 12 7.500" /><path d="M9 12.500a3.500 3.500 0 0 1 3.500-3v3z" fill="#111" stroke="none" /></svg></TaskCell>
        <TaskCell w={24}><svg width="16" height="13" viewBox="0 0 16 13" fill="none" stroke="#111" strokeWidth="1.100"><path d="M.6 4.300h2.200L6 1v11L2.800 8.700H.6z" /><path d="M8 4.500q1 2 0 4M10.300 3q2 3.500 0 7" /><path d="M12.800 1.300q3 5.200 0 10.400" stroke="#888" /></svg></TaskCell>
        <TaskCell w={35}><Label size={12} color="#111">ENG</Label></TaskCell>
        <Clock><Label size={12} track={-0.35} color="#111">9:39 pm</Label><Label size={12} track={-0.5} color="#111">16/01/2024</Label></Clock>
        <Spacer w={12} />
        <TaskCell w={24}>
          <svg width="24" height="32" viewBox="0 -6 24 32"><path d="M0 2h16v12H8l-3 3v-3H0z" /><path d="M3 5.500h10M3 8h10M3 10.500h6" stroke="#fff" />
            <circle cx="15.500" cy="17.500" r="8" fill="#d0d3d6" stroke="#85888b" /><text x="15.500" y="21.800" fontSize="12" textAnchor="middle" fill="#111">1</text></svg>
        </TaskCell>
        <Spacer w={12} /><PeekEdge />
      </Taskbar>
    </Screen>
  );
}
